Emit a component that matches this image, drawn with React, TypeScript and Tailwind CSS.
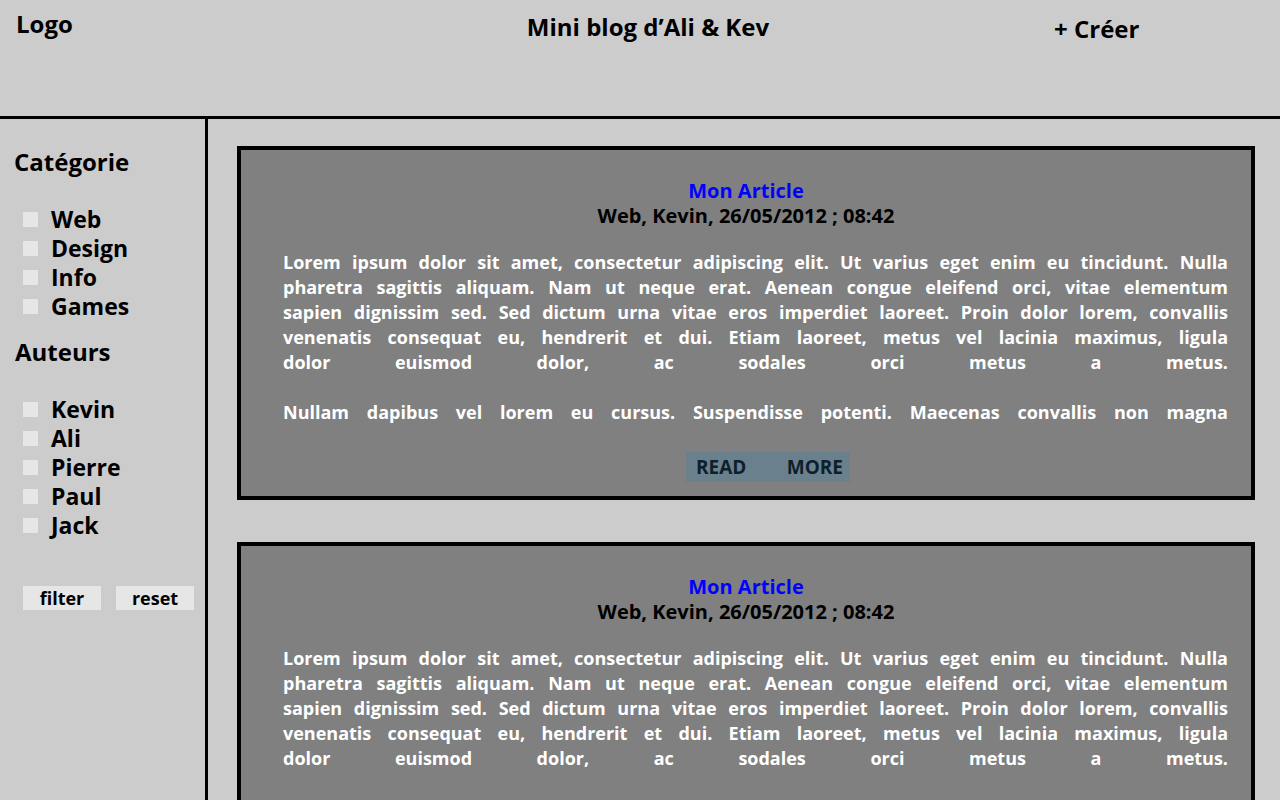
const font = "font-['Open_Sans',sans-serif]";

const lines1 = [
  "Lorem ipsum dolor sit amet, consectetur adipiscing elit. Ut varius eget enim eu tincidunt. Nulla",
  "pharetra sagittis aliquam. Nam ut neque erat. Aenean congue eleifend orci, vitae elementum",
  "sapien dignissim sed. Sed dictum urna vitae eros imperdiet laoreet. Proin dolor lorem, convallis",
  "venenatis consequat eu, hendrerit et dui. Etiam laoreet, metus vel lacinia maximus, ligula",
  "dolor euismod dolor, ac sodales orci metus a metus.",
];
const lines2 = ["Nullam dapibus vel lorem eu cursus. Suspendisse potenti. Maecenas convallis non magna"];

const categories = ["Web", "Design", "Info", "Games"];
const authors = ["Kevin", "Ali", "Pierre", "Paul", "Jack"];

function CheckList({ items }: { items: string[] }) {
  return (
    <div className="flex flex-col">
      {items.map((it) => (
        <label key={it} className="flex items-center h-[29px] text-[23px] font-bold text-black">
          <span className="ml-[23px] mr-[13px] w-[15px] h-[15px] bg-[#e6e6e6]" />
          {it}
        </label>
      ))}
    </div>
  );
}

function Article() {
  return (
    <div className="border-4 border-black bg-[#808080] pt-[28px] pb-[14px]">
      <div className="text-center text-[20px] leading-[25px] font-bold text-[#0000ff]">Mon Article</div>
      <div className="text-center text-[20px] leading-[25px] font-bold text-black">
        Web, Kevin, 26/05/2012 ; 08:42
      </div>
      <div className="mt-[22px] ml-[42px] mr-[23px] h-[175px] text-[18px] leading-[25px] font-bold text-white text-justify [text-align-last:justify]">
        <p>
          {lines1.map((l, i) => (
            <span key={i}>
              {l}
              <br />
            </span>
          ))}
        </p>
        <p className="mt-[25px]">{lines2[0]}</p>
      </div>
      <div className="mt-[27px] flex justify-center">
        <div className="ml-[44px] w-[164px] h-[30px] bg-[#6a808c] flex items-center justify-between pl-[10px] pr-[7px] text-[19px] leading-[30px] font-bold text-[#0d1f2b]">
          <span>READ</span>
          <span>MORE</span>
        </div>
      </div>
    </div>
  );
}

export default function App() {
  return (
    <div className={`${font} bg-[#cccccc] h-[800px] overflow-hidden`}>
      <header className="h-[119px] border-b-[3px] border-black flex items-start text-[24px] font-bold text-black">
        <div className="w-[500px] pl-[16px] pt-[6px]">Logo</div>
        <div className="w-[300px] text-center pt-[9px] -ml-[2px]">Mini blog d’Ali &amp; Kev</div>
        <div className="pl-[256px] pt-[11px]">+ Créer</div>
      </header>

      <div className="flex">
        <aside className="w-[208px] shrink-0 border-r-[3px] border-black h-[681px] pt-[28px]">
          <h3 className="pl-[14px] text-[24px] font-bold leading-[30px]">Catégorie</h3>
          <div className="mt-[28px]">
            <CheckList items={categories} />
          </div>
          <h3 className="pl-[15px] mt-[16px] text-[24px] font-bold leading-[30px]">Auteurs</h3>
          <div className="mt-[28px]">
            <CheckList items={authors} />
          </div>
          <div className="mt-[46px] ml-[23px] flex gap-[15px]">
            <button className="w-[78px] h-[24px] bg-[#e6e6e6] text-[18px] font-bold leading-[24px]">filter</button>
            <button className="w-[78px] h-[24px] bg-[#e6e6e6] text-[18px] font-bold leading-[24px]">reset</button>
          </div>
        </aside>

        <main className="flex-1 pl-[29px] pr-[25px] pt-[27px] flex flex-col gap-[42px]">
          <Article />
          <Article />
        </main>
      </div>
    </div>
  );
}
